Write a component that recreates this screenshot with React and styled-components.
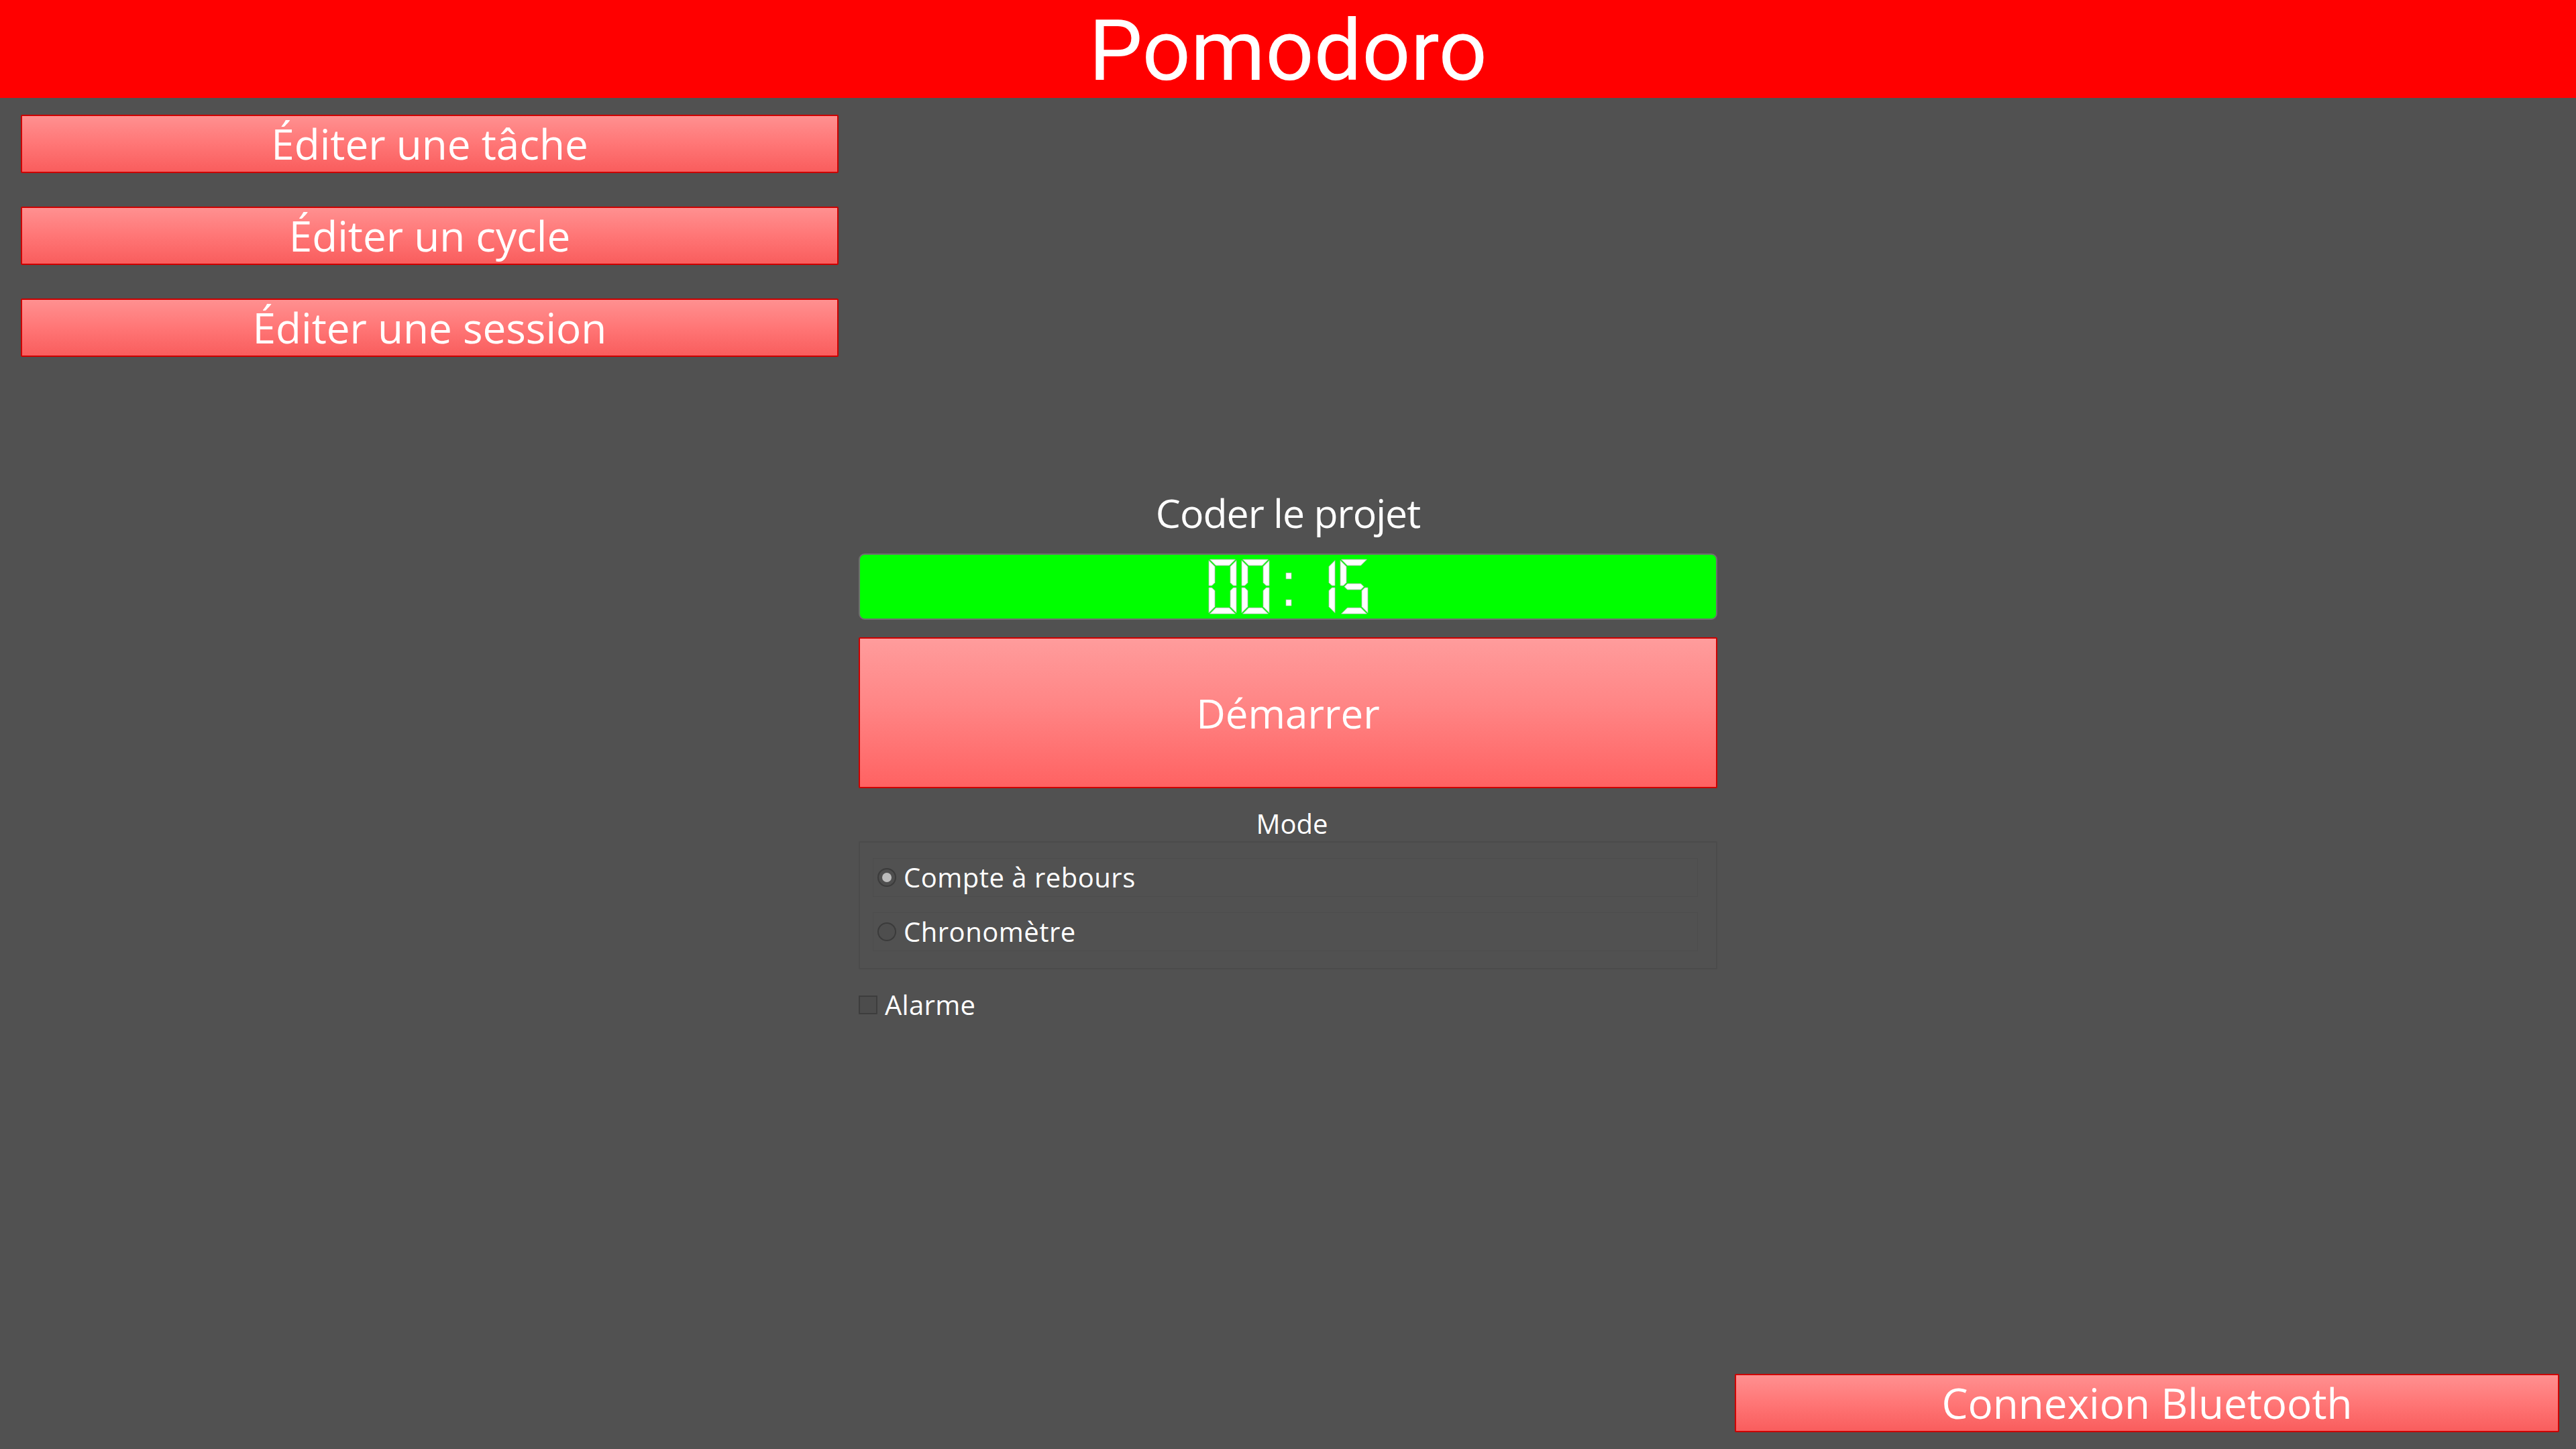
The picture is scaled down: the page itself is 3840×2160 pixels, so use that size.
import React from "react";
import styled, { createGlobalStyle } from "styled-components";

const GlobalStyle = createGlobalStyle`
  html, body {
    margin: 0;
    padding: 0;
    background: #515151;
    font-family: "Open Sans", "Noto Sans", "Liberation Sans", sans-serif;
    color: #ffffff;
    -webkit-font-smoothing: antialiased;
  }
  * { box-sizing: border-box; }
`;

const Page = styled.div`
  display: flex;
  flex-direction: column;
  height: 100vh;
  background: #515151;
`;

const Header = styled.header`
  flex: 0 0 145px;
  background: #ff0000;
  display: flex;
  align-items: center;
  justify-content: center;
  padding-top: 6px;
`;

const AppTitle = styled.h1`
  margin: 0;
  font-family: Roboto, "Open Sans", sans-serif;
  font-size: 127px;
  line-height: 1.1;
  font-weight: 400;
  color: #ffffff;
`;

const Body = styled.main`
  flex: 1;
  display: grid;
  grid-template-columns: 1280px 1280px 1280px;
`;

const SideColumn = styled.section`
  display: flex;
  flex-direction: column;
  gap: 50px;
  justify-content: ${(p) => (p.$bottom ? "flex-end" : "flex-start")};
  padding: ${(p) => (p.$bottom ? "0 25px 25px 26px" : "25px 30px 0 31px")};
`;

const CenterColumn = styled.section`
  display: flex;
  flex-direction: column;
  padding-top: 588px;
`;

const ActionButton = styled.button`
  display: flex;
  align-items: center;
  justify-content: center;
  width: 100%;
  height: ${(p) => (p.$large ? "225px" : "87px")};
  margin: 0;
  padding: 0;
  border: 2px solid #cc0000;
  border-radius: 2px;
  background: ${(p) =>
    p.$large
      ? "linear-gradient(to bottom, #ff9c9c 0%, #ff8585 45%, #ff6262 100%)"
      : "linear-gradient(to bottom, #ff9090 0%, #ff7676 50%, #f95d5d 100%)"};
  color: #ffffff;
  font-family: "Open Sans", "Noto Sans", sans-serif;
  font-size: ${(p) => (p.$large ? "60px" : "62px")};
  line-height: 1.2;
  font-weight: 400;
  cursor: pointer;
`;

const TaskTitle = styled.h2`
  margin: -5px 0 26px;
  font-size: 59px;
  line-height: 1.2;
  font-weight: 400;
  letter-spacing: -1px;
  text-align: center;
`;

const LcdFrame = styled.div`
  height: 99px;
  border: 2px solid #6e6e6e;
  border-radius: 9px;
  background: #00ff00;
  display: flex;
  align-items: center;
  justify-content: center;
  margin-bottom: 26px;
`;

const LcdDigits = styled.div`
  position: relative;
  display: flex;
  align-items: center;
  gap: 8px;
`;

const LcdText = styled.span`
  position: absolute;
  inset: 0;
  display: flex;
  align-items: center;
  justify-content: center;
  color: transparent;
  font-family: "DejaVu Sans Mono", monospace;
  font-size: 70px;
  line-height: 1.1;
  letter-spacing: 4px;
  white-space: nowrap;
`;

const ModeLabel = styled.div`
  margin-top: 29px;
  font-size: 40px;
  line-height: 1.2;
  text-align: center;
  padding-left: 12px;
`;

const GroupBox = styled.div`
  margin-top: 2px;
  height: 191px;
  border: 2px solid #4b4b4b;
  border-radius: 2px;
  padding: 23px 27px 0 19px;
  display: flex;
  flex-direction: column;
  gap: 23px;
`;

const OptionRow = styled.label`
  display: flex;
  align-items: center;
  gap: 11px;
  height: 58px;
  padding-left: 6px;
  border: 1px solid rgba(0, 0, 0, 0.04);
  font-size: 40px;
  line-height: 1.2;
  letter-spacing: 0.5px;
  cursor: pointer;
`;

const RadioCircle = styled.span`
  flex: 0 0 28px;
  width: 28px;
  height: 28px;
  border-radius: 50%;
  border: 2px solid #3b3b3b;
  background: #4e4e4e;
  display: flex;
  align-items: center;
  justify-content: center;
  &::after {
    content: "";
    width: 14px;
    height: 14px;
    border-radius: 50%;
    background: ${(p) => (p.$checked ? "#bcbcbc" : "transparent")};
  }
`;

const CheckRow = styled.label`
  margin-top: 29px;
  display: flex;
  align-items: center;
  gap: 11px;
  height: 48px;
  font-size: 40px;
  line-height: 1.2;
  letter-spacing: 0.3px;
  cursor: pointer;
`;

const CheckSquare = styled.span`
  flex: 0 0 28px;
  width: 28px;
  height: 28px;
  border: 2px solid #3d3d3d;
  border-radius: 1px;
  background: #4c4c4c;
`;

/* ---- seven-segment LCD drawing ---- */
const W = 41;
const H = 81;
const T = 9;
const G = 1.5;
const M = H / 2;

const SEGMENTS = {
  a: `${G},0 ${W - G},0 ${W - T - G},${T} ${T + G},${T}`,
  d: `${G},${H} ${W - G},${H} ${W - T - G},${H - T} ${T + G},${H - T}`,
  f: `0,${G} ${T},${T + G} ${T},${M - T / 2 - G} ${T / 2},${M - G} 0,${M - G}`,
  e: `0,${H - G} ${T},${H - T - G} ${T},${M + T / 2 + G} ${T / 2},${M + G} 0,${M + G}`,
  b: `${W},${G} ${W - T},${T + G} ${W - T},${M - T / 2 - G} ${W - T / 2},${M - G} ${W},${M - G}`,
  c: `${W},${H - G} ${W - T},${H - T - G} ${W - T},${M + T / 2 + G} ${W - T / 2},${M + G} ${W},${M + G}`,
  g: `${T / 2 + G},${M} ${T + G},${M - T / 2} ${W - T - G},${M - T / 2} ${W - T / 2 - G},${M} ${W - T - G},${M + T / 2} ${T + G},${M + T / 2}`,
};

const DIGIT_SEGMENTS = {
  "0": "abcdef",
  "1": "bc",
  "2": "abged",
  "3": "abgcd",
  "4": "fgbc",
  "5": "afgcd",
  "6": "afgedc",
  "7": "abc",
  "8": "abcdefg",
  "9": "abcdfg",
};

const SegmentSvg = styled.svg`
  display: block;
  width: ${W}px;
  height: ${H}px;
  overflow: visible;
`;

function LcdCell({ ch }) {
  if (ch === ":") {
    return (
      <SegmentSvg viewBox={`0 0 ${W} ${H}`} aria-hidden="true">
        <rect x="17" y="20" width="8" height="9" fill="#ffffff" stroke="#b5b5b5" strokeWidth="0.7" />
        <rect x="17" y="60" width="8" height="9" fill="#ffffff" stroke="#b5b5b5" strokeWidth="0.7" />
      </SegmentSvg>
    );
  }
  const on = DIGIT_SEGMENTS[ch] || "";
  return (
    <SegmentSvg viewBox={`0 0 ${W} ${H}`} aria-hidden="true">
      {on.split("").map((s) => (
        <polygon key={s} points={SEGMENTS[s]} fill="#ffffff" stroke="#b8b8b8" strokeWidth="0.8" />
      ))}
    </SegmentSvg>
  );
}

function LcdDisplay({ value }) {
  return (
    <LcdFrame role="timer">
      <LcdDigits>
        {value.split("").map((ch, i) => (
          <LcdCell key={i} ch={ch} />
        ))}
        <LcdText>{value}</LcdText>
      </LcdDigits>
    </LcdFrame>
  );
}

const editActions = ["Éditer une tâche", "Éditer un cycle", "Éditer une session"];

export default function App() {
  const mode = "countdown";
  return (
    <>
      <GlobalStyle />
      <Page>
        <Header>
          <AppTitle>Pomodoro</AppTitle>
        </Header>
        <Body>
          <SideColumn>
            {editActions.map((label) => (
              <ActionButton key={label}>{label}</ActionButton>
            ))}
          </SideColumn>
          <CenterColumn>
            <TaskTitle>Coder le projet</TaskTitle>
            <LcdDisplay value="00:15" />
            <ActionButton $large>Démarrer</ActionButton>
            <ModeLabel>Mode</ModeLabel>
            <GroupBox>
              <OptionRow>
                <RadioCircle $checked={mode === "countdown"} />
                Compte à rebours
              </OptionRow>
              <OptionRow>
                <RadioCircle $checked={mode === "stopwatch"} />
                Chronomètre
              </OptionRow>
            </GroupBox>
            <CheckRow>
              <CheckSquare />
              Alarme
            </CheckRow>
          </CenterColumn>
          <SideColumn $bottom>
            <ActionButton>Connexion Bluetooth</ActionButton>
          </SideColumn>
        </Body>
      </Page>
    </>
  );
}
